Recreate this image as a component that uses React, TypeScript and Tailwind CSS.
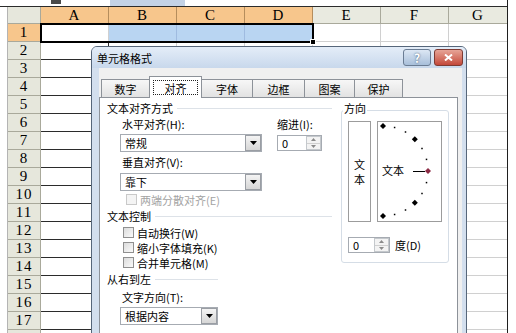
import React from "react";

const ROWS = Array.from({ length: 18 }, (_, i) => i + 1);

function DropArrow() {
  return (
    <svg width="7" height="4" viewBox="0 0 7 4">
      <path d="M0 0h7L3.5 4z" fill="#000" />
    </svg>
  );
}

function Combo({ text, width }: { text: string; width: string }) {
  return (
    <div className={`${width} h-[18px] border border-[#a6abb2] bg-white flex items-stretch`}>
      <div className="flex-1 pl-[4px] flex items-center">{text}</div>
      <div className="w-[16px] border border-[#9a9ea4] bg-gradient-to-b from-[#f4f4f4] to-[#d6d6d6] flex items-center justify-center">
        <DropArrow />
      </div>
    </div>
  );
}

function Spin({ width }: { width: string }) {
  return (
    <div className={`${width} h-[16px] border border-[#a6abb2] bg-white flex items-stretch`}>
      <div className="flex-1 pl-[4px] flex items-center leading-none">0</div>
      <div className="w-[15px] border border-[#c4c8cc] bg-[#f3f3f3] flex flex-col">
        <div className="flex-1 flex items-center justify-center border-b border-[#d0d0d0]">
          <svg width="5" height="3" viewBox="0 0 5 3">
            <path d="M0 3h5L2.5 0z" fill="#8a8a8a" />
          </svg>
        </div>
        <div className="flex-1 flex items-center justify-center">
          <svg width="5" height="3" viewBox="0 0 5 3">
            <path d="M0 0h5L2.5 3z" fill="#8a8a8a" />
          </svg>
        </div>
      </div>
    </div>
  );
}

function Check({ label, disabled }: { label: string; disabled?: boolean }) {
  return (
    <div className="h-[15px] flex items-center gap-[3px]">
      <div
        className={
          disabled
            ? "w-[11px] h-[11px] border border-[#c9c9c9] bg-[#f4f4f4]"
            : "w-[11px] h-[11px] border border-[#8f8f8f] bg-gradient-to-br from-[#dcdcdc] to-[#fafafa]"
        }
      />
      <span className={disabled ? "text-[#a3a3a3]" : ""}>{label}</span>
    </div>
  );
}

function SectionHead({ text, width }: { text: string; width: string }) {
  return (
    <div className={`${width} h-[14px] flex items-center gap-[4px]`}>
      <span className="whitespace-nowrap">{text}</span>
      <div className="flex-1 h-px bg-[#dde2e8]" />
    </div>
  );
}

function Orientation() {
  const diamonds = [
    [5, 4],
    [36.8, 17.2],
    [36.8, 80.8],
    [5, 94],
  ];
  const dots = [
    [16.6, 5.5],
    [27.5, 10],
    [44, 26.5],
    [48.5, 37.4],
    [48.5, 60.6],
    [44, 71.5],
    [27.5, 88],
    [16.6, 92.5],
  ];
  const dia = (x: number, y: number) =>
    `${x},${y - 3} ${x + 3},${y} ${x},${y + 3} ${x - 3},${y}`;
  return (
    <svg width="63" height="99" viewBox="0 0 63 99">
      {diamonds.map(([x, y]) => (
        <polygon key={`${x}-${y}`} points={dia(x, y)} fill="#000" />
      ))}
      {dots.map(([x, y]) => (
        <rect key={`${x}-${y}`} x={x - 0.75} y={y - 0.75} width="1.5" height="1.5" fill="#000" />
      ))}
      <text
        x="4"
        y="53"
        fontSize="11"
        fontFamily="'Noto Sans CJK SC', sans-serif"
        fill="#000"
      >
        文本
      </text>
      <line x1="35" y1="49.5" x2="47" y2="49.5" stroke="#000" strokeWidth="1" />
      <polygon points={dia(50, 49)} fill="#8c2b45" />
    </svg>
  );
}

function SheetRow({ n }: { n: number }) {
  const sel = n === 1;
  return (
    <div className="flex h-[18px]">
      <div
        className={`w-[33px] shrink-0 border-r border-b border-[#a9a99b] flex items-center justify-center ${
          sel ? "bg-[#f7c68c]" : "bg-[#e6e7dc]"
        }`}
      >
        {n < 18 ? n : ""}
      </div>
      <div
        className={`w-[68px] shrink-0 border-r border-b bg-white ${
          sel ? "border-[#d0d0d0]" : "border-[#2b2b2b]"
        }`}
      />
      {["B", "C", "D"].map((c) => (
        <div
          key={c}
          className={`w-[68px] shrink-0 border-r border-b ${
            sel ? "bg-[#b9d5f2] border-[#9fbbe0]" : "bg-white border-[#d0d0d0]"
          }`}
        />
      ))}
      <div className="w-[68px] shrink-0 border-r border-b border-[#d0d0d0]" />
      <div className="w-[68px] shrink-0 border-r border-b border-[#d0d0d0]" />
      <div className="w-[58px] shrink-0 border-b border-[#d0d0d0]" />
    </div>
  );
}

export default function App() {
  const tabs = [
    { t: "数字", w: "w-[49px]" },
    { t: "对齐", w: "w-[53px]", active: true },
    { t: "字体", w: "w-[52px]" },
    { t: "边框", w: "w-[53px]" },
    { t: "图案", w: "w-[51px]" },
    { t: "保护", w: "w-[49px]" },
  ];

  return (
    <div className="relative w-[516px] h-[333px] overflow-hidden bg-white text-black font-['Noto_Sans_CJK_SC','Noto_Sans',sans-serif] text-[11px] leading-[14px]">
      {/* spreadsheet */}
      <div className="w-[508px] h-[333px] border-r border-[#1f1f1f] flex flex-col">
        <div className="h-[7px] shrink-0 border-b border-[#2b2b2b] flex items-start">
          <div className="w-[51px]" />
          <div className="w-[10px] h-[4px] bg-[#4a4a4a]" />
          <div className="w-[49px]" />
          <div className="w-[75px] h-[6px] bg-[#c3d2e6]" />
        </div>
        <div className="ml-[7px] border-l border-[#b4b4b4] font-['Liberation_Serif',serif] text-[15px] leading-none tracking-[1px]">
          <div className="flex h-[17px]">
            <div className="w-[33px] shrink-0 border-r border-b border-[#a9a99b] bg-[#e6e7dc]" />
            {["A", "B", "C", "D"].map((c) => (
              <div
                key={c}
                className="w-[68px] shrink-0 border-r border-b border-[#b58d5c] bg-[#f7c68c] flex items-center justify-center"
              >
                {c}
              </div>
            ))}
            {["E", "F"].map((c) => (
              <div
                key={c}
                className="w-[68px] shrink-0 border-r border-b border-[#a9a99b] bg-[#e9eae0] flex items-center justify-center"
              >
                {c}
              </div>
            ))}
            <div className="w-[58px] shrink-0 border-b border-[#a9a99b] bg-[#e9eae0] flex items-center justify-center">
              G
            </div>
          </div>
          {ROWS.map((n) => (
            <SheetRow key={n} n={n} />
          ))}
        </div>
      </div>

      {/* selection A1:D1 */}
      <div className="absolute left-[40px] top-[23px] w-[274px] h-[20px] border-2 border-black pointer-events-none" />
      <div className="absolute left-[310px] top-[39px] w-[6px] h-[6px] bg-black border border-white" />

      {/* dialog */}
      <div className="absolute left-[91px] top-[46px] w-[376px] h-[300px] flex flex-col rounded-t-[6px] border border-[#56667a] bg-[#d3dfee]">
        <div className="h-[21px] shrink-0 flex items-center pl-[5px] pr-[3px] rounded-t-[5px] bg-gradient-to-b from-[#e4edf8] to-[#c8d8ec]">
          <span>单元格格式</span>
          <div className="ml-auto flex gap-[3px]">
            <div className="w-[28px] h-[17px] rounded-[3px] border border-[#6a7c93] bg-gradient-to-b from-[#dce7f4] to-[#a8bfda] flex items-center justify-center text-white font-bold text-[12px] leading-none [text-shadow:0_0_2px_#2c4766]">
              ?
            </div>
            <div className="w-[29px] h-[17px] rounded-[3px] border border-[#7e3b33] bg-gradient-to-b from-[#e6a497] to-[#c3473a] flex items-center justify-center">
              <svg width="9" height="7" viewBox="0 0 9 7">
                <path d="M1 0.5l7 6M8 0.5l-7 6" stroke="#fff" strokeWidth="2" />
              </svg>
            </div>
          </div>
        </div>

        <div className="flex-1 ml-[7px] mr-[4px] pr-[4px] pt-[8px] bg-[#f0f0f0] flex flex-col">
          {/* tabs */}
          <div className="h-[21px] shrink-0 flex items-end pl-[2px]">
            {tabs.map((tab, i) =>
              tab.active ? (
                <div
                  key={tab.t}
                  className={`${tab.w} h-[22px] -mb-px -ml-px relative z-10 border border-b-0 border-[#8d9299] bg-white flex items-center justify-center`}
                >
                  <div className="w-[45px] h-[15px] border border-dotted border-[#222] flex items-center justify-center">
                    {tab.t}
                  </div>
                </div>
              ) : (
                <div
                  key={tab.t}
                  className={`${tab.w} h-[18px] ${
                    i > 0 ? "-ml-px" : ""
                  } border border-b-0 border-[#8d9299] bg-gradient-to-b from-[#f7f7f7] to-[#e2e2e2] flex items-center justify-center`}
                >
                  {tab.t}
                </div>
              )
            )}
          </div>

          {/* panel */}
          <div className="flex-1 border border-[#8d9299] bg-white flex items-start">
            <div className="w-[232px] shrink-0 pl-[7px] pt-[3px] flex flex-col">
              <SectionHead text="文本对齐方式" width="w-[225px]" />
              <div className="flex mt-[2px]">
                <div className="w-[170px] shrink-0">
                  <div className="h-[14px] pl-[15px]">水平对齐(H):</div>
                  <div className="mt-[3px] ml-[13px]">
                    <Combo text="常规" width="w-[142px]" />
                  </div>
                </div>
                <div>
                  <div className="h-[14px]">缩进(I):</div>
                  <div className="mt-[4px]">
                    <Spin width="w-[45px]" />
                  </div>
                </div>
              </div>
              <div className="h-[14px] pl-[15px] mt-[3px]">垂直对齐(V):</div>
              <div className="mt-[4px] ml-[13px]">
                <Combo text="靠下" width="w-[142px]" />
              </div>
              <div className="mt-[1px] ml-[19px]">
                <Check label="两端分散对齐(E)" disabled />
              </div>
              <div className="mt-[2px]">
                <SectionHead text="文本控制" width="w-[225px]" />
              </div>
              <div className="mt-[2px] ml-[16px] flex flex-col">
                <Check label="自动换行(W)" />
                <Check label="缩小字体填充(K)" />
                <Check label="合并单元格(M)" />
              </div>
              <div className="mt-[2px]">
                <SectionHead text="从右到左" width="w-[111px]" />
              </div>
              <div className="h-[14px] pl-[15px] mt-[4px]">文字方向(T):</div>
              <div className="mt-[3px] ml-[13px]">
                <Combo text="根据内容" width="w-[98px]" />
              </div>
            </div>

            <div className="ml-[9px] mt-[12px] w-[108px] h-[153px] shrink-0 border border-[#d5dde6] rounded-[3px] flex flex-col">
              <div className="-mt-[10px] ml-[1px] w-fit px-[1px] h-[14px] bg-white">方向</div>
              <div className="flex mt-[6px] ml-[6px] gap-[6px]">
                <div className="w-[23px] h-[101px] border border-[#9c9c9c] flex flex-col items-center justify-center leading-[15px]">
                  <span>文</span>
                  <span>本</span>
                </div>
                <div className="w-[65px] h-[101px] border border-[#9c9c9c] flex">
                  <Orientation />
                </div>
              </div>
              <div className="flex items-center mt-[15px] ml-[6px] gap-[5px]">
                <Spin width="w-[42px]" />
                <span>度(D)</span>
              </div>
            </div>
          </div>
        </div>
      </div>
    </div>
  );
}
